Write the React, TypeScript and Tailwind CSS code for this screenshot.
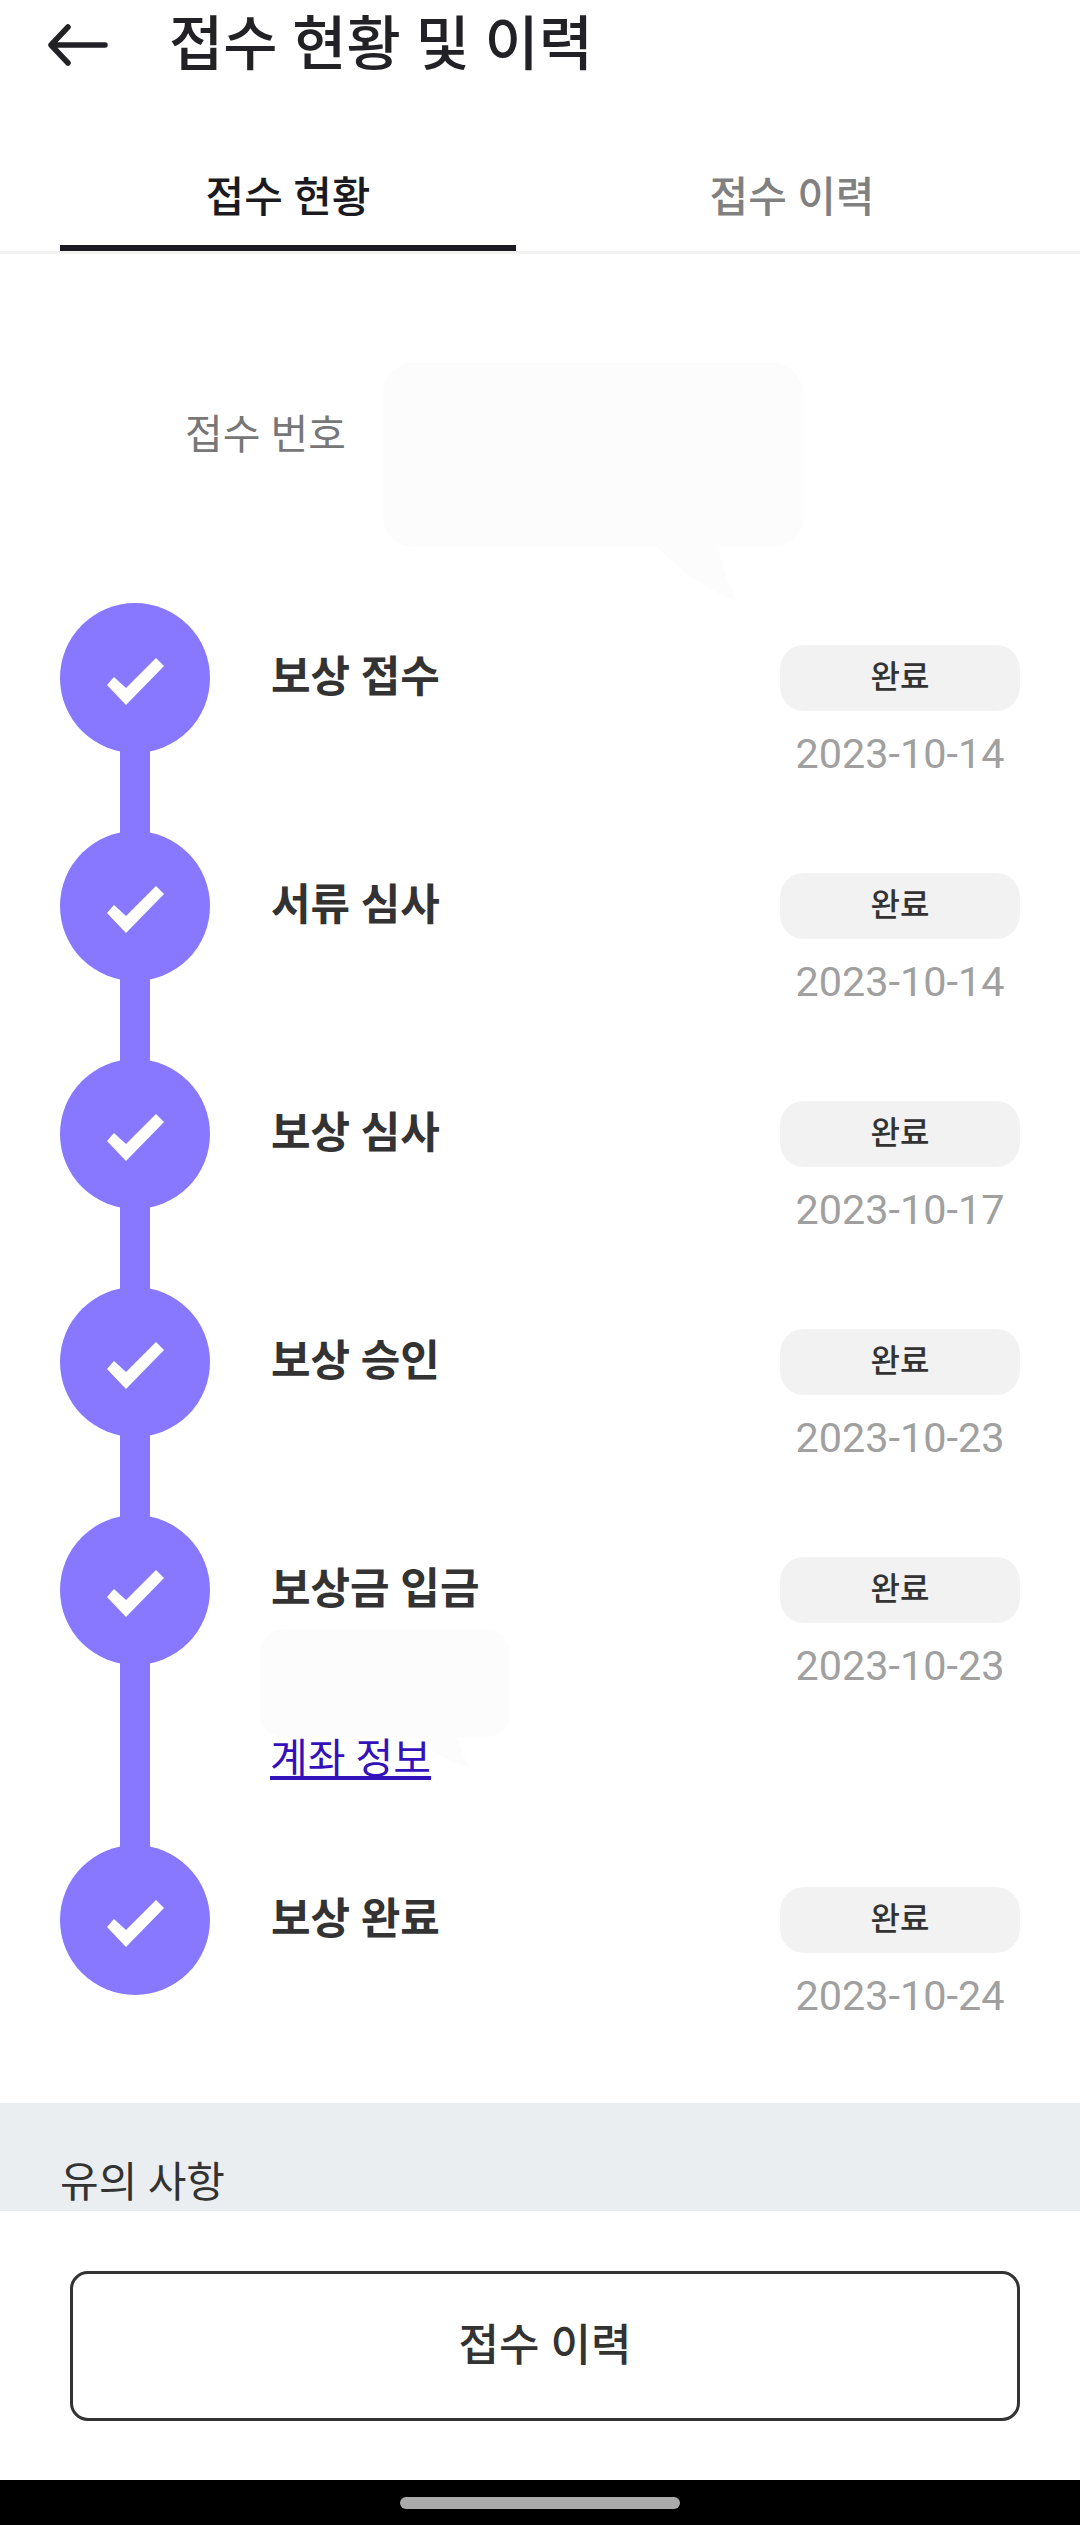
const KR = "font-['Roboto','Noto_Sans_CJK_KR',sans-serif]";

type Step = { label: string; date: string; link?: boolean };
const steps: Step[] = [
  { label: "보상 접수", date: "2023-10-14" },
  { label: "서류 심사", date: "2023-10-14" },
  { label: "보상 심사", date: "2023-10-17" },
  { label: "보상 승인", date: "2023-10-23" },
  { label: "보상금 입금", date: "2023-10-23", link: true },
  { label: "보상 완료", date: "2023-10-24" },
];

function Circle() {
  return (
    <div className="relative z-10 w-[150px] h-[150px] shrink-0 rounded-full bg-[#8778ff]">
      <svg className="block" width="150" height="150" viewBox="0 0 150 150">
        <polygon points="47,82 66,102 104,63 96,55 66,85 54,74" fill="#ffffff" />
      </svg>
    </div>
  );
}

function Row({ step, last }: { step: Step; last: boolean }) {
  return (
    <div className={`flex ${step.link ? "h-[330px]" : last ? "h-[150px]" : "h-[228px]"}`}>
      <div className="w-[150px] flex flex-col items-center shrink-0">
        <Circle />
        {!last && <div className="w-[30px] flex-1 -my-[4px] bg-[#8778ff]" />}
      </div>
      <div className="relative flex-1 ml-[61px]">
        <div className="mt-[43px] text-[43px] leading-[62px] font-bold text-[#333333]">{step.label}</div>
        {step.link && (
          <>
            <svg className="absolute left-[-11px] top-[114px]" width="252" height="142" viewBox="0 0 252 142">
              <path d="M24 0H226a24 24 0 0 1 24 24V84a24 24 0 0 1-24 24H198Q201 125 210 139Q180 130 154 108H24a24 24 0 0 1-24-24V24A24 24 0 0 1 24 0Z" fill="#fcfcfc" />
            </svg>
            <a className="absolute left-[-1px] top-[213px] text-[41px] leading-[62px] underline text-[#3311bb]">계좌 정보</a>
          </>
        )}
      </div>
      <div className="w-[240px] shrink-0 flex flex-col items-center">
        <div className="mt-[42px] w-[240px] h-[66px] shrink-0 rounded-[24px] bg-[#f2f2f2] flex items-center justify-center text-[32px] font-medium text-[#333333]">
          <span className="-mt-[2px]">완료</span>
        </div>
        <div className="mt-[13px] shrink-0 text-[41.4px] leading-[60px] text-[#a0a0a0]">{step.date}</div>
      </div>
    </div>
  );
}

export default function App() {
  return (
    <div className={`${KR} w-[1080px] h-[2525px] overflow-hidden bg-white flex flex-col`}>
      <header className="flex items-center h-[89px] pl-[48px] shrink-0">
        <svg width="60" height="42" viewBox="0 0 60 42" fill="none" stroke="#222226" strokeWidth="5.5" strokeLinecap="round" strokeLinejoin="round">
          <path d="M57 21H4M20 3L3 21L20 39" />
        </svg>
        <h1 className="ml-[61px] text-[59px] leading-[80px] font-medium text-[#222226]">접수 현황 및 이력</h1>
      </header>

      <nav className="flex gap-[48px] px-[60px] h-[165px] border-b-[3px] border-[#f2f2f2] shrink-0">
        <div className="flex-1 pt-[78px] border-b-[6px] border-[#1a1a20] text-center text-[42px] leading-[62px] font-medium text-[#1a1a20]">접수 현황</div>
        <div className="flex-1 pt-[78px] text-center text-[42px] leading-[62px] font-medium text-[#808080]">접수 이력</div>
      </nav>

      <section className="relative h-[349px] shrink-0">
        <div className="absolute left-[185px] top-[151px] text-[41px] leading-[60px] text-[#777777]">접수 번호</div>
        <svg className="absolute left-[383px] top-[109px]" width="422" height="240" viewBox="0 0 422 240">
          <path d="M30 0H390a30 30 0 0 1 30 30V154a30 30 0 0 1-30 30H335Q340 210 354 238Q315 225 274 184H30a30 30 0 0 1-30-30V30A30 30 0 0 1 30 0Z" fill="#fcfcfc" />
        </svg>
      </section>

      <div className="px-[60px] shrink-0 flex flex-col">
        {steps.map((s, i) => (
          <Row key={i} step={s} last={i === steps.length - 1} />
        ))}
      </div>

      <section className="mt-[108px] h-[108px] bg-[#ebeef0] px-[60px] pt-[50px] shrink-0 overflow-hidden">
        <div className="text-[42px] leading-[60px] text-[#333333]">유의 사항</div>
      </section>

      <div className="flex-1 bg-white pl-[70px] pr-[60px] pt-[60px]">
        <button className="w-full h-[150px] border-[3px] border-[#333333] rounded-[18px] bg-white text-[44px] font-medium text-[#333333]">접수 이력</button>
      </div>

      <div className="h-[45px] bg-black flex justify-center pt-[17px] shrink-0">
        <div className="w-[280px] h-[12px] rounded-full bg-[#aaaaaa]" />
      </div>
    </div>
  );
}
